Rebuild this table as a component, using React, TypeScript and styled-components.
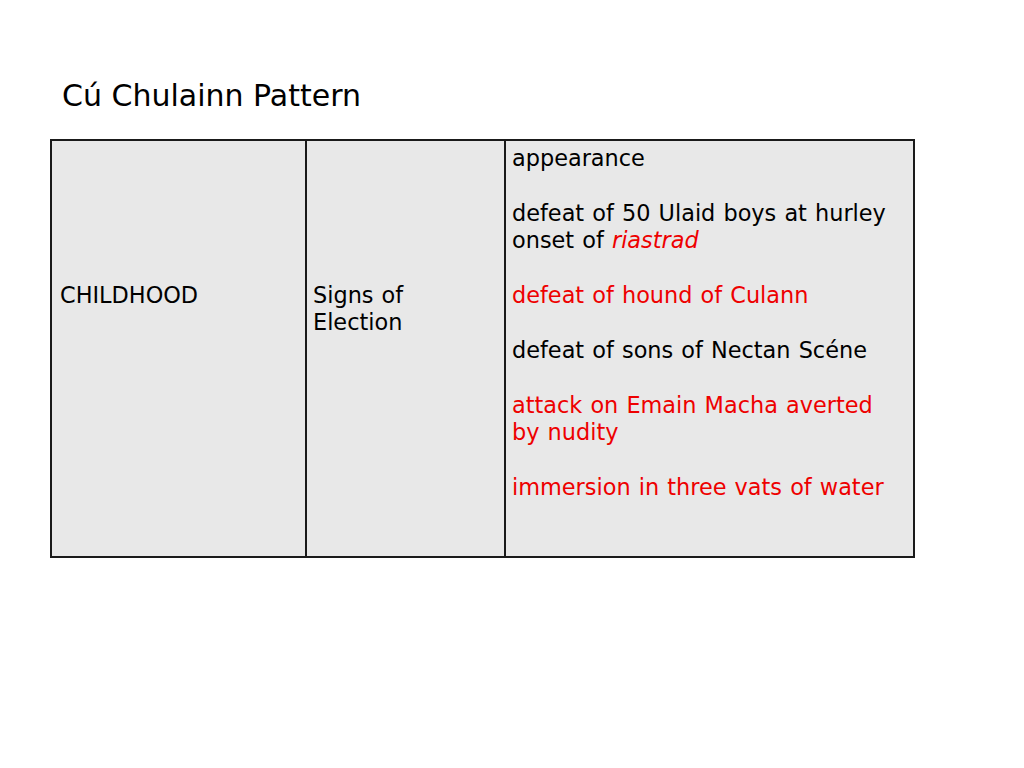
import React from "react";
import styled, { createGlobalStyle } from "styled-components";

const Global = createGlobalStyle`
  html, body { margin: 0; padding: 0; background: #ffffff; }
  body { font-family: "DejaVu Sans", Verdana, sans-serif; color: #000; }
`;

const Page = styled.div`
  width: 1024px;
  height: 768px;
  padding: 76px 0 0 50px;
  box-sizing: border-box;
`;

const Title = styled.h1`
  margin: 0 0 0 12px;
  font-size: 30px;
  font-weight: normal;
  line-height: 40px;
  height: 63px;
`;

const Table = styled.div`
  display: grid;
  grid-template-columns: 255px 199px 411px;
  width: 865px;
  height: 419px;
  border: 2px solid #1a1a1a;
  box-sizing: border-box;
  background: #e8e8e8;
`;

const Cell = styled.div<{ $top: number; $left: number; $last?: boolean }>`
  padding: ${(p) => p.$top}px 4px 0 ${(p) => p.$left}px;
  border-right: ${(p) => (p.$last ? "none" : "2px solid #1a1a1a")};
  font-size: 22.4px;
  line-height: 27.4px;
  word-spacing: 1px;
`;

const Para = styled.p<{ $red?: boolean }>`
  margin: 0 0 27.4px 0;
  color: ${(p) => (p.$red ? "#ee0000" : "#000")};
`;

const Em = styled.em`
  color: #ee0000;
`;

export default function App() {
  return (
    <>
      <Global />
      <Page>
        <Title>Cú Chulainn Pattern</Title>
        <Table>
          <Cell $top={141} $left={8}>CHILDHOOD</Cell>
          <Cell $top={141} $left={6}>
            Signs of
            <br />
            Election
          </Cell>
          <Cell $top={4} $left={6} $last>
            <Para>appearance</Para>
            <Para>
              defeat of 50 Ulaid boys at hurley
              <br />
              onset of <Em>riastrad</Em>
            </Para>
            <Para $red>defeat of hound of Culann</Para>
            <Para>defeat of sons of Nectan Scéne</Para>
            <Para $red>
              attack on Emain Macha averted
              <br />
              by nudity
            </Para>
            <Para $red>immersion in three vats of water</Para>
          </Cell>
        </Table>
      </Page>
    </>
  );
}
